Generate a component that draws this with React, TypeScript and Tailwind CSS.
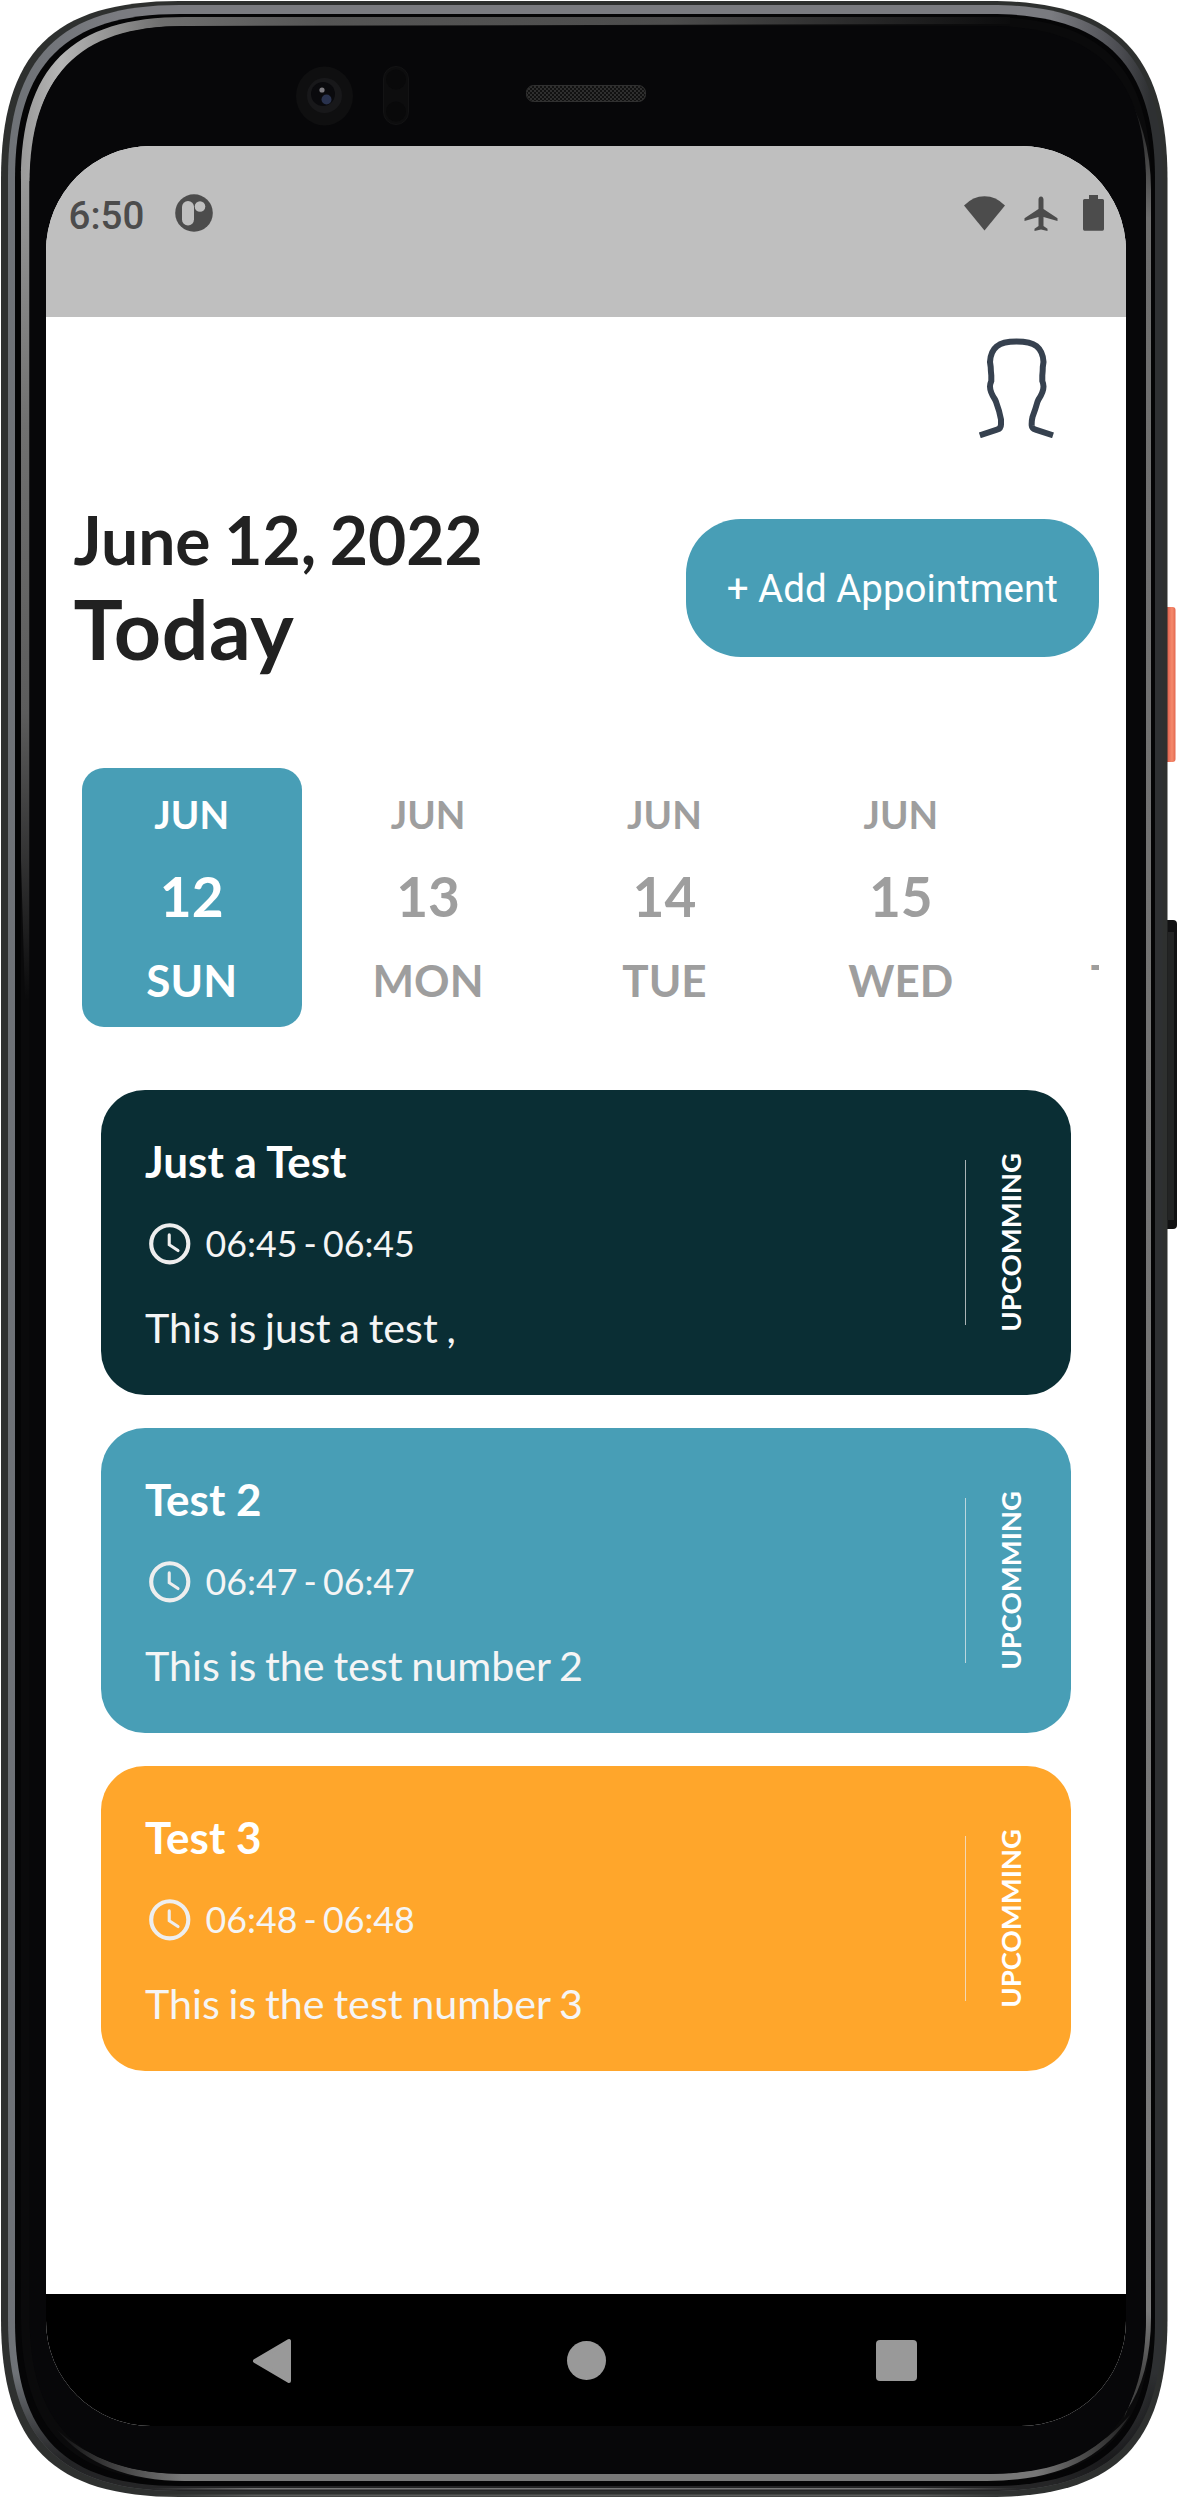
import React from "react";

type Day = { month: string; day: string; weekday: string };
type Task = { title: string; time: string; note: string; color: string };

const days: Day[] = [
  { month: "JUN", day: "12", weekday: "SUN" },
  { month: "JUN", day: "13", weekday: "MON" },
  { month: "JUN", day: "14", weekday: "TUE" },
  { month: "JUN", day: "15", weekday: "WED" },
  { month: "JUN", day: "16", weekday: "THU" },
];

const tasks: Task[] = [
  { title: "Just a Test", time: "06:45 - 06:45", note: "This is just a test ,", color: "bg-[#0a2e34]" },
  { title: "Test 2", time: "06:47 - 06:47", note: "This is the test number 2", color: "bg-[#489eb6]" },
  { title: "Test 3", time: "06:48 - 06:48", note: "This is the test number 3", color: "bg-[#ffa62b]" },
];

// Rounded body outline with softened (squircle-like) corners.
function body(l: number, t: number, r: number, b: number, c: number, h: number) {
  return [
    `M${l} ${t + c}C${l} ${t + h} ${l + h} ${t} ${l + c} ${t}`,
    `H${r - c}C${r - h} ${t} ${r} ${t + h} ${r} ${t + c}`,
    `V${b - c}C${r} ${b - h} ${r - h} ${b} ${r - c} ${b}`,
    `H${l + c}C${l + h} ${b} ${l} ${b - h} ${l} ${b - c}Z`,
  ].join("");
}

function PhoneBody() {
  return (
    <svg className="absolute inset-0" width="1178" height="2498" viewBox="0 0 1178 2498" fill="none" aria-hidden="true">
      <defs>
        <linearGradient id="power" x1="1166" x2="1176" y1="0" y2="0" gradientUnits="userSpaceOnUse">
          <stop offset="0" stopColor="#c9523c" />
          <stop offset="0.3" stopColor="#e8705a" />
          <stop offset="0.6" stopColor="#f58a6c" />
          <stop offset="1" stopColor="#e0644c" />
        </linearGradient>
        <linearGradient id="metal" x1="0" x2="1168" y1="0" y2="0" gradientUnits="userSpaceOnUse">
          <stop offset="0" stopColor="#6d7176" />
          <stop offset="0.1" stopColor="#7a7b80" />
          <stop offset="0.9" stopColor="#7a7b80" />
          <stop offset="0.96" stopColor="#4a4b50" />
          <stop offset="0.985" stopColor="#2e3032" />
          <stop offset="1" stopColor="#2e3032" />
        </linearGradient>
        <linearGradient id="metalFade" x1="0" x2="0" y1="0" y2="2498" gradientUnits="userSpaceOnUse">
          <stop offset="0.95" stopColor="#000" stopOpacity="0" />
          <stop offset="0.985" stopColor="#000" stopOpacity="0.7" />
        </linearGradient>
        <linearGradient id="edgeTop" x1="21" x2="1020" y1="0" y2="0" gradientUnits="userSpaceOnUse">
          <stop offset="0" stopColor="#999" />
          <stop offset="0.04" stopColor="#b5b5b5" />
          <stop offset="0.14" stopColor="#6f6f6f" />
          <stop offset="0.3" stopColor="#555" />
          <stop offset="0.65" stopColor="#4c4c4c" />
          <stop offset="1" stopColor="#0a0a0b" />
        </linearGradient>
        <linearGradient id="edgeLeft" x1="0" x2="0" y1="180" y2="1000" gradientUnits="userSpaceOnUse">
          <stop offset="0" stopColor="#989898" />
          <stop offset="0.3" stopColor="#707070" />
          <stop offset="0.65" stopColor="#5c5c5c" />
          <stop offset="1" stopColor="#0a0a0b" />
        </linearGradient>
        <linearGradient id="edgeRight" x1="0" x2="0" y1="80" y2="2380" gradientUnits="userSpaceOnUse">
          <stop offset="0" stopColor="#0a0a0b" />
          <stop offset="0.06" stopColor="#6d6d6d" />
          <stop offset="0.97" stopColor="#7a7a7a" />
          <stop offset="1" stopColor="#444" />
        </linearGradient>
        <linearGradient id="edgeBottom" x1="50" x2="1146" y1="0" y2="0" gradientUnits="userSpaceOnUse">
          <stop offset="0" stopColor="#0a0a0b" />
          <stop offset="0.12" stopColor="#777" />
          <stop offset="0.9" stopColor="#777" />
          <stop offset="1" stopColor="#111" />
        </linearGradient>
        <linearGradient id="rim" x1="150" x2="1020" y1="0" y2="0" gradientUnits="userSpaceOnUse">
          <stop offset="0" stopColor="#777" stopOpacity="0" />
          <stop offset="0.12" stopColor="#777" />
          <stop offset="0.88" stopColor="#777" />
          <stop offset="1" stopColor="#777" stopOpacity="0" />
        </linearGradient>
        <pattern id="mesh" width="4" height="4" patternUnits="userSpaceOnUse">
          <rect width="4" height="4" fill="#111" />
          <circle cx="1" cy="1" r="0.9" fill="#3c3c3c" />
          <circle cx="3" cy="3" r="0.9" fill="#3c3c3c" />
        </pattern>
      </defs>

      <rect x="1160" y="607" width="15.5" height="155" rx="3" fill="url(#power)" />
      <rect x="1160" y="920" width="17" height="309" rx="4" fill="#111112" />
      <rect x="1168" y="932" width="6" height="288" fill="#232424" />

      <path d={body(1, 1, 1167.5, 2497, 178, 52)} fill="#2e302f" />
      <path d={body(8, 5, 1162.5, 2491, 172, 52)} fill="url(#metal)" />
      <path d={body(8, 5, 1162.5, 2491, 172, 52)} fill="url(#metalFade)" />
      <path d={body(15, 14, 1155, 2486, 165, 50)} fill="#050506" />
      <rect x="150" y="2488" width="870" height="1.500" fill="url(#rim)" />
      <rect x="150" y="2494.500" width="870" height="2" fill="url(#rim)" opacity="0.6" />
      <path d={body(21, 17, 1151, 2481, 164, 50)} fill="#0a0a0b" />

      <path d="M21 181C21 67 71 17 185 17H1010V24L185 26C76 26 30 76 30 190V181Z" fill="url(#edgeTop)" />
      <path d="M21 180H29.500V1000H25L21 860Z" fill="url(#edgeLeft)" />
      <path d="M1120 82Q1151 130 1151 190V2317Q1151 2375 1126 2412L1124 2418Q1146 2370 1146 2310V190Q1146 130 1120 82Z" fill="url(#edgeRight)" />
      <path d="M57 2430Q100 2481 185 2481H987Q1090 2481 1130 2415Q1080 2474 987 2474H185Q105 2474 57 2430Z" fill="url(#edgeBottom)" />

      <path d={body(29.5, 26, 1146, 2474, 158, 50)} fill="#070709" />

      <ellipse cx="324.500" cy="96" rx="28.500" ry="29.500" fill="#0f0f10" />
      <circle cx="324.500" cy="95.500" r="17.500" fill="#18181a" />
      <circle cx="323" cy="94" r="12" fill="#0a0a0d" />
      <circle cx="326.500" cy="99.500" r="5" fill="#29324e" />
      <circle cx="322" cy="90" r="2.600" fill="#7d7b80" />
      <rect x="383.500" y="66.500" width="25" height="58" rx="12.500" fill="#0d0d0e" stroke="#131314" />
      <circle cx="396" cy="79.500" r="10" fill="#09090a" />
      <circle cx="396" cy="111.500" r="10" fill="#09090a" />
      <rect x="526.500" y="85.500" width="119" height="16" rx="7" fill="url(#mesh)" stroke="#303030" />
    </svg>
  );
}

function StatusBar() {
  return (
    <header className="flex h-[171px] shrink-0 items-start justify-between bg-[#bfbfbf] pl-[22.5px] pr-[21px] text-[#4c4c4c]">
      <div className="flex items-center pt-[41.5px]">
        <span className="mt-[5px] w-[106px] font-['Roboto',sans-serif] text-[38.5px] font-medium leading-[46px]">6:50</span>
        <svg width="38" height="38" viewBox="0 0 38 38" aria-hidden="true">
          <circle cx="19" cy="19" r="18.800" fill="currentColor" />
          <rect x="7" y="7" width="12" height="24.500" rx="6" fill="#bfbfbf" />
          <circle cx="25" cy="12.500" r="5.300" fill="#bfbfbf" />
        </svg>
      </div>
      <div className="flex items-center gap-[19px] pt-[49px]">
        <svg width="41" height="36" viewBox="0 0 41 36" fill="currentColor" aria-hidden="true">
          <path d="M0 10.500Q9 1.200 20.500 1.200T41 10.500L20.500 35.500Z" />
        </svg>
        <svg width="34" height="36" viewBox="0 0 34 36" fill="currentColor" aria-hidden="true">
          <path d="M17 1.500C18.700 1.500 19.500 3 19.500 4.500V14L33.500 23.200V26L19.500 22V31L23.500 33.700V36L17 34.500L10.500 36V33.700L14.500 31V22L.5 26V23.200L14.500 14V4.500C14.500 3 15.300 1.500 17 1.500Z" />
        </svg>
        <svg className="ml-[6px]" width="22" height="36" viewBox="0 0 22 36" fill="currentColor" aria-hidden="true">
          <path d="M6 0H15V4H19.500Q21 4 21 5.500V34Q21 35.700 19.500 35.700H1.500Q0 35.700 0 34V5.500Q0 4 1.500 4H6Z" />
        </svg>
      </div>
    </header>
  );
}

function ProfileIcon() {
  return (
    <svg width="79" height="100" viewBox="0 0 79 100" fill="none" stroke="#36414f" strokeWidth="6" aria-hidden="true">
      <path d="M2.800 97.300L20 91.700Q24 90.500 24 86.500V81.500Q22.500 73 19 63.700L18 61.500Q13 54 13 48.500Q13 46 14.300 43V37.500Q13.800 33 13.700 29L13 24Q13.500 13.500 20 8.200Q25.500 3.500 39.500 3.500Q53.500 3.500 59.500 8.200Q66 13.500 66.500 24L65.800 29Q65.800 33 65.300 37.500V43Q66.500 46 66.500 48.500Q66.500 54 61.500 61.500L60.500 63.700Q58.500 71 55.500 79Q54.500 83 54.700 87.500Q55 90.700 58.500 91.700L76 97.300" />
    </svg>
  );
}

function DayTile({ item, active }: { item: Day; active: boolean }) {
  return (
    <div
      className={
        "mx-[8.2px] flex h-[258.5px] w-[220px] shrink-0 flex-col items-center rounded-[22px] pt-[22.5px] font-bold " +
        (active ? "bg-[#489eb6] text-white" : "text-[#9e9e9e]")
      }
    >
      <span className="text-[38.5px] leading-[46px]">{item.month}</span>
      <span className="mt-[26.5px] text-[55px] leading-[66px]">{item.day}</span>
      <span className="mt-[25px] text-[44px] leading-[53px]">{item.weekday}</span>
    </div>
  );
}

function TaskCard({ task }: { task: Task }) {
  return (
    <article className={"flex h-[305.25px] items-center rounded-[44px] pl-[44px] pr-[44.5px] " + task.color}>
      <div className="flex flex-1 flex-col pt-[1.5px]">
        <h2 className="text-[44px] font-bold leading-[52.5px] text-white">{task.title}</h2>
        <div className="mt-[32px] flex items-center gap-[11px] text-[#f5f5f5]">
          <svg width="49.500" height="49.500" viewBox="0 0 24 24" fill="none" stroke="#eeeeee" aria-hidden="true">
            <circle cx="12" cy="12" r="9" strokeWidth="2" />
            <path d="M11.750 7.700V12.500L16 15.300" strokeWidth="1.500" strokeLinecap="round" />
          </svg>
          <span className="text-[35.75px] leading-[43px] [word-spacing:-3px]">{task.time}</span>
        </div>
        <p className="mt-[34px] text-[41.25px] leading-[49.5px] text-[#f5f5f5] [word-spacing:-1.8px]">{task.note}</p>
      </div>
      <div className="mr-[27.5px] h-[165px] w-[1.4px] bg-[#eeeeee]/70" />
      <span className="rotate-180 text-[27.5px] font-bold leading-[33px] text-white [writing-mode:vertical-rl]">UPCOMMING</span>
    </article>
  );
}

function NavBar() {
  return (
    <nav className="flex h-[132px] shrink-0 items-center bg-black pl-[206px] pt-[1px]">
      <svg width="40" height="46" viewBox="0 0 40 46" aria-hidden="true">
        <path d="M3 23L37 3V43Z" fill="#999" stroke="#999" strokeWidth="4" strokeLinejoin="round" />
      </svg>
      <div className="ml-[275px] h-[39px] w-[39px] rounded-full bg-[#999]" />
      <div className="ml-[270px] h-[41px] w-[41px] rounded-[4px] bg-[#999]" />
    </nav>
  );
}

export default function App() {
  return (
    <div className="relative h-[2498px] w-[1178px] overflow-hidden bg-white font-['Lato',sans-serif]">
      <PhoneBody />
      <div className="relative pl-[46px] pt-[146px]">
        <div className="flex h-[2280px] w-[1080px] flex-col overflow-hidden rounded-[105px] bg-white">
          <StatusBar />
          <main className="flex flex-1 flex-col">
            <div className="flex justify-end pr-[70px] pt-[21px]">
              <ProfileIcon />
            </div>
            <section className="mt-[62px] flex items-center justify-between px-[27.5px] font-bold text-[#212121]">
              <div>
                <p className="text-[66px] leading-[79px] [word-spacing:-2.5px]">June 12, 2022</p>
                <h1 className="text-[82.5px] leading-[99px] tracking-[0.6px]">Today</h1>
              </div>
              <button className="mb-[2px] h-[137.5px] w-[412.5px] rounded-[55px] bg-[#489eb6] pt-[1.5px] font-['Roboto',sans-serif] text-[38.5px] font-normal text-white">
                + Add Appointment
              </button>
            </section>
            <section className="mx-[27.5px] mt-[90px] flex overflow-hidden">
              {days.map((d, i) => (
                <DayTile key={d.day} item={d} active={i === 0} />
              ))}
            </section>
            <section className="mt-[63.500px] flex flex-col gap-[32.75px] px-[55px]">
              {tasks.map((t) => (
                <TaskCard key={t.title} task={t} />
              ))}
            </section>
          </main>
          <NavBar />
        </div>
      </div>
    </div>
  );
}
